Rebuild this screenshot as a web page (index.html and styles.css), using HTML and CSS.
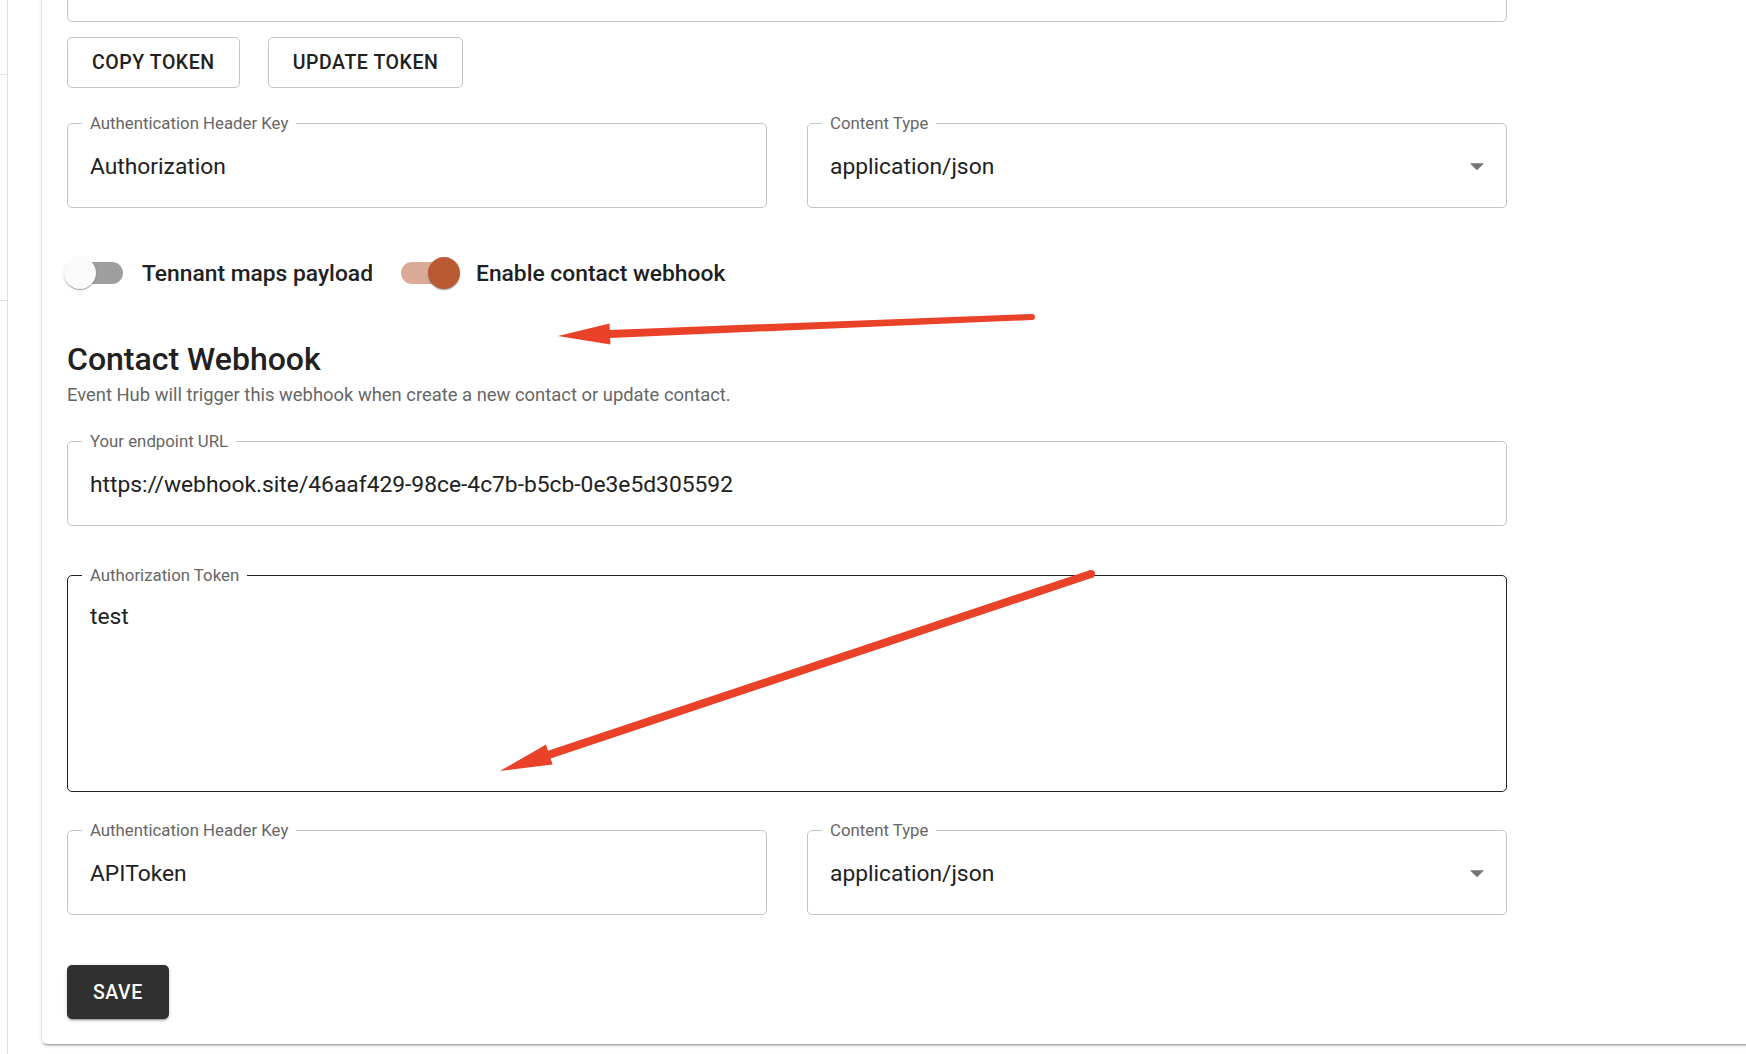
FILE: index.html
```html
<!DOCTYPE html>
<html lang="en">
<head>
    <meta charset="UTF-8">
    <meta name="viewport" content="width=device-width, initial-scale=1.0">
    <title>Webhook settings</title>
    <link rel="stylesheet" href="styles.css">
</head>
<body>
    <div class="sidebar">
        <div class="sidebar__divider"></div>
        <div class="sidebar__divider sidebar__divider--second"></div>
    </div>

    <main class="main">
        <div class="card">
            <div class="form">
                <fieldset class="field field--top">
                    <textarea class="field__area field__area--top" readonly></textarea>
                </fieldset>

                <div class="actions">
                    <button class="btn btn--outlined">Copy token</button>
                    <button class="btn btn--outlined">Update token</button>
                </div>

                <div class="field-row">
                    <fieldset class="field">
                        <legend>Authentication Header Key</legend>
                        <input class="field__input" type="text" value="Authorization">
                    </fieldset>
                    <fieldset class="field">
                        <legend>Content Type</legend>
                        <div class="field__select">
                            <span>application/json</span>
                            <svg class="field__icon" viewBox="0 0 24 24" width="34" height="34"><path d="M7 10l5 5 5-5z"/></svg>
                        </div>
                    </fieldset>
                </div>

                <div class="toggles">
                    <label class="toggle"><span class="switch"></span>Tennant maps payload</label>
                    <label class="toggle"><span class="switch switch--on"></span>Enable contact webhook</label>
                </div>

                <h2 class="section-title">Contact Webhook</h2>
                <p class="section-desc">Event Hub will trigger this webhook when create a new contact or update contact.</p>

                <fieldset class="field field--url">
                    <legend>Your endpoint URL</legend>
                    <input class="field__input" type="text" value="https://webhook.site/46aaf429-98ce-4c7b-b5cb-0e3e5d305592">
                </fieldset>

                <fieldset class="field field--token field--hover">
                    <legend>Authorization Token</legend>
                    <textarea class="field__area">test</textarea>
                </fieldset>

                <div class="field-row field-row--second">
                    <fieldset class="field">
                        <legend>Authentication Header Key</legend>
                        <input class="field__input" type="text" value="APIToken">
                    </fieldset>
                    <fieldset class="field">
                        <legend>Content Type</legend>
                        <div class="field__select">
                            <span>application/json</span>
                            <svg class="field__icon" viewBox="0 0 24 24" width="34" height="34"><path d="M7 10l5 5 5-5z"/></svg>
                        </div>
                    </fieldset>
                </div>

                <button class="btn btn--contained">Save</button>
            </div>
        </div>
    </main>

    <!-- red arrows drawn over the screenshot -->
    <svg class="annotations" width="1746" height="1054" viewBox="0 0 1746 1054">
        <g fill="#ea4229">
            <polygon points="1031.9,314 609.8,329.9 609.5,323.4 558,336 610.4,344.4 610.1,337.9 1032.1,320"/>
            <circle cx="1032" cy="317" r="3"/>
            <polygon points="1089.7,570.2 548,750.8 546,744.6 500,771 552.6,764.6 550.6,758.4 1092.3,577.8"/>
            <circle cx="1091" cy="574" r="4"/>
        </g>
    </svg>
</body>
</html>
```

FILE: styles.css
```css
* { box-sizing: border-box; }

body {
    margin: 0;
    height: 1054px;
    overflow: hidden;
    display: flex;
    position: relative;
    background: #ffffff;
    font-family: Roboto, "Liberation Sans", Arial, sans-serif;
    color: #212121;
}

.sidebar {
    width: 8px;
    flex: none;
    border-right: 1px solid #e0e0e0;
}
.sidebar__divider {
    height: 1px;
    margin-top: 74px;
    background: #e0e0e0;
}
.sidebar__divider--second { margin-top: 225px; }

.main {
    flex: 1;
    padding-left: 34px;
}

.card {
    margin-top: -100px;
    margin-right: -12px;
    padding: 25px;
    background: #ffffff;
    border-radius: 5px;
    box-shadow: 0 3px 1px -2px rgba(0, 0, 0, 0.2), 0 2px 2px 0 rgba(0, 0, 0, 0.14), 0 1px 5px 0 rgba(0, 0, 0, 0.12);
}

.form { width: 1440px; }

/* outlined text fields */
.field {
    margin: 0;
    min-width: 0;
    padding: 0 22px 10px;
    border: 1px solid #c4c4c4;
    border-radius: 5px;
}
.field legend {
    margin-left: -8px;
    padding: 0 8px;
    font-size: 16.8px;
    line-height: 20px;
    color: #666666;
}
.field--hover { border-color: #212121; }

.field__input {
    display: block;
    width: 100%;
    height: 64px;
    padding: 2px 0 0;
    border: 0;
    outline: 0;
    background: transparent;
    font: inherit;
    font-size: 22.8px;
    color: #212121;
}

.field__area {
    display: block;
    width: 100%;
    height: 196px;
    padding: 16px 0 0;
    border: 0;
    outline: 0;
    resize: none;
    background: transparent;
    font: inherit;
    font-size: 22.8px;
    line-height: 1.4375;
    color: #212121;
}
.field__area--top { height: 85px; }

.field__select {
    display: flex;
    align-items: center;
    justify-content: space-between;
    height: 64px;
    padding-top: 2px;
    font-size: 22.8px;
}
.field__icon {
    margin-right: -10px;
    fill: #757575;
}

.field-row {
    display: grid;
    grid-template-columns: 1fr 1fr;
    gap: 40px;
    margin-top: 25px;
}
.field-row--second { margin-top: 28px; }

.field--url { margin-top: 23px; }
.field--token { margin-top: 39px; }

/* buttons */
.actions {
    display: flex;
    gap: 28px;
    margin-top: 15px;
}

.btn {
    height: 51px;
    padding: 0 24px;
    border-radius: 5px;
    font-family: inherit;
    font-size: 19.5px;
    font-weight: 500;
    letter-spacing: 0.02857em;
    text-transform: uppercase;
    cursor: pointer;
}
.btn--outlined {
    border: 1px solid #c4c4c4;
    background: transparent;
    color: #212121;
}
.btn--contained {
    height: 54px;
    margin-top: 50px;
    padding: 0 26px;
    border: 0;
    background: #303030;
    color: #ffffff;
    box-shadow: 0 3px 1px -2px rgba(0, 0, 0, 0.2), 0 2px 2px 0 rgba(0, 0, 0, 0.14), 0 1px 5px 0 rgba(0, 0, 0, 0.12);
}

/* switches */
.toggles {
    display: flex;
    align-items: center;
    gap: 28px;
    height: 50px;
    margin-top: 40px;
}
.toggle {
    display: flex;
    align-items: center;
    gap: 19px;
    font-size: 22.8px;
    font-weight: 500;
    color: #212121;
}
.switch {
    position: relative;
    flex: none;
    width: 56px;
    height: 22px;
    border-radius: 11px;
    background: #9e9e9e;
}
.switch::after {
    content: "";
    position: absolute;
    top: -5px;
    left: -3px;
    width: 32px;
    height: 32px;
    border-radius: 50%;
    background: #fafafa;
    box-shadow: 0 2px 1px -1px rgba(0, 0, 0, 0.2), 0 1px 1px 0 rgba(0, 0, 0, 0.14), 0 1px 3px 0 rgba(0, 0, 0, 0.12);
}
.switch--on { background: #dcab98; }
.switch--on::after {
    left: auto;
    right: -3px;
    background: #b95a33;
}

/* section heading */
.section-title {
    margin: 40px 0 0;
    font-size: 32px;
    line-height: 42px;
    font-weight: 500;
    color: #212121;
}
.section-desc {
    margin: 2px 0 0;
    font-size: 18.4px;
    line-height: 26px;
    color: #666666;
}

.annotations {
    position: absolute;
    top: 0;
    left: 0;
    pointer-events: none;
}
```
